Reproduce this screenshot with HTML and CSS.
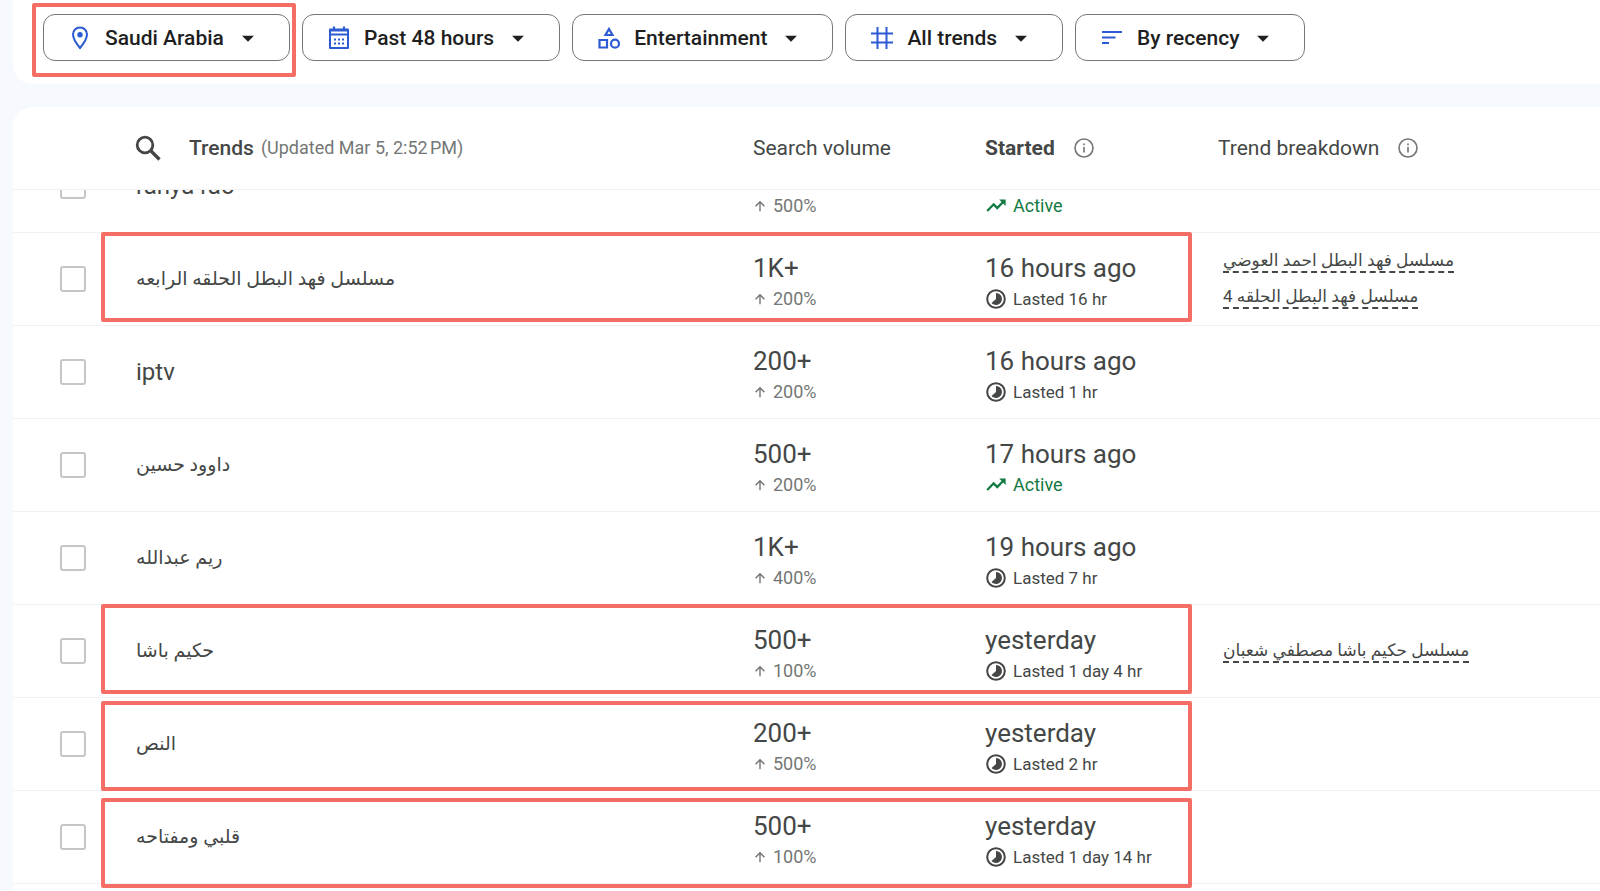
FILE: index.html
```html
<!DOCTYPE html>
<html lang="en">
<head>
<meta charset="utf-8">
<title>Trending searches</title>
<link rel="stylesheet" href="styles.css">
</head>
<body>
<svg class="sprite" aria-hidden="true">
  <symbol id="caret" viewBox="0 0 24 24"><path d="M5.500 9.500h13l-6.500 6.500z" fill="currentColor"/></symbol>
  <symbol id="info" viewBox="0 0 24 24"><circle cx="12" cy="12" r="9.800" fill="none" stroke="currentColor" stroke-width="1.800"/><path d="M12 11v6M12 7v2" stroke="currentColor" stroke-width="1.800"/></symbol>
  <symbol id="up" viewBox="0 0 24 24"><path d="M10.800 21V7.800l-5.400 5.400L3.500 11.500l8.500-8.500 8.500 8.500-1.900 1.700-5.400-5.400V21z" fill="currentColor"/></symbol>
  <symbol id="trend" viewBox="0 0 24 24"><path d="M15.500 5l2.600 2.600-4.700 4.800-4-4L1.500 16.600 3.200 18.300l6.200-6.300 4 4 6.400-6.700L22.500 12V5z" fill="currentColor"/></symbol>
  <symbol id="lasted" viewBox="0 0 24 24"><circle cx="12" cy="12" r="9.600" fill="none" stroke="currentColor" stroke-width="2.200"/><path d="M12 5.500v6.500l-4.900 4.300A6.500 6.500 0 1 0 12 5.500z" fill="currentColor"/></symbol>
</svg>

<header class="filters">
  <button class="filter filter--marked" type="button" aria-haspopup="listbox">
    <svg class="filter__icon" viewBox="0 0 24 24"><path d="M12 1.500c-4 0-7 3-7 7 0 5 7 13.500 7 13.500s7-8.500 7-13.500c0-4-3-7-7-7z" fill="none" stroke="currentColor" stroke-width="2"/><circle cx="12" cy="8.700" r="2.700" fill="currentColor"/></svg>
    <span>Saudi Arabia</span><svg class="filter__caret"><use href="#caret"/></svg>
  </button>
  <button class="filter" type="button" aria-haspopup="listbox">
    <svg class="filter__icon" viewBox="0 0 24 24"><path d="M3 3.500h18V22H3z" fill="none" stroke="currentColor" stroke-width="2" stroke-linejoin="round"/><path d="M3 4.500h18M3 8.500h18" stroke="currentColor" stroke-width="2.200"/><path d="M7 0.500v4M17 0.500v4" stroke="currentColor" stroke-width="2.200"/><path d="M7 13.500h10M7 17.500h10" stroke="currentColor" stroke-width="2" stroke-dasharray="2 2"/></svg>
    <span>Past 48 hours</span><svg class="filter__caret"><use href="#caret"/></svg>
  </button>
  <button class="filter" type="button" aria-haspopup="listbox">
    <svg class="filter__icon" viewBox="0 0 24 24"><path d="M12 3l3.500 6h-7zM2.500 14h7.500v7.500h-7.500z" fill="none" stroke="currentColor" stroke-width="2.200"/><circle cx="18" cy="17.700" r="4" fill="none" stroke="currentColor" stroke-width="2.200"/></svg>
    <span>Entertainment</span><svg class="filter__caret"><use href="#caret"/></svg>
  </button>
  <button class="filter" type="button" aria-haspopup="listbox">
    <svg class="filter__icon" viewBox="0 0 24 24"><path d="M7.500 1v22M16.500 1v22M1 7.500h22M1 16.500h22" stroke="currentColor" stroke-width="2"/></svg>
    <span>All trends</span><svg class="filter__caret"><use href="#caret"/></svg>
  </button>
  <button class="filter" type="button" aria-haspopup="listbox">
    <svg class="filter__icon" viewBox="0 0 24 24"><path d="M2 6h20M2 11.500h13.500M2 17h7" stroke="currentColor" stroke-width="2.200"/></svg>
    <span>By recency</span><svg class="filter__caret"><use href="#caret"/></svg>
  </button>
</header>

<main class="panel">
  <table class="trends">
    <thead>
      <tr class="row row--head">
        <td></td>
        <th><button class="search" type="button" aria-label="Search trends"><svg viewBox="0 0 26 26"><circle cx="10" cy="10" r="7.800" fill="none" stroke="currentColor" stroke-width="2.800"/><path d="M15.500 15.500l9 9" stroke="currentColor" stroke-width="3.400"/></svg></button><span class="title">Trends</span><small class="updated">(Updated Mar 5, 2:52&#8239;PM)</small></th>
        <th>Search volume</th>
        <th class="sorted">Started <svg class="info"><use href="#info"/></svg></th>
        <th>Trend breakdown <svg class="info"><use href="#info"/></svg></th>
      </tr>
    </thead>
    <tbody>
      <tr class="row">
        <td class="check"><input type="checkbox" aria-label="ranya rao"></td>
        <td class="name">ranya rao</td>
        <td><div class="value">500+</div><div class="sub sub--volume"><svg><use href="#up"/></svg>500%</div></td>
        <td><div class="value">16 hours ago</div><div class="sub sub--active"><svg><use href="#trend"/></svg>Active</div></td>
        <td></td>
      </tr>
      <tr class="row marked">
        <td class="check"><input type="checkbox" aria-label="مسلسل فهد البطل الحلقه الرابعه"></td>
        <td class="name"><bdi lang="ar">مسلسل فهد البطل الحلقه الرابعه</bdi></td>
        <td><div class="value">1K+</div><div class="sub sub--volume"><svg><use href="#up"/></svg>200%</div></td>
        <td><div class="value">16 hours ago</div><div class="sub"><svg><use href="#lasted"/></svg>Lasted 16 hr</div></td>
        <td class="breakdown"><a href="#" lang="ar" dir="rtl">مسلسل فهد البطل احمد العوضي</a><a href="#" lang="ar" dir="rtl">مسلسل فهد البطل الحلقه 4</a></td>
      </tr>
      <tr class="row">
        <td class="check"><input type="checkbox" aria-label="iptv"></td>
        <td class="name">iptv</td>
        <td><div class="value">200+</div><div class="sub sub--volume"><svg><use href="#up"/></svg>200%</div></td>
        <td><div class="value">16 hours ago</div><div class="sub"><svg><use href="#lasted"/></svg>Lasted 1 hr</div></td>
        <td></td>
      </tr>
      <tr class="row">
        <td class="check"><input type="checkbox" aria-label="داوود حسين"></td>
        <td class="name"><bdi lang="ar">داوود حسين</bdi></td>
        <td><div class="value">500+</div><div class="sub sub--volume"><svg><use href="#up"/></svg>200%</div></td>
        <td><div class="value">17 hours ago</div><div class="sub sub--active"><svg><use href="#trend"/></svg>Active</div></td>
        <td></td>
      </tr>
      <tr class="row">
        <td class="check"><input type="checkbox" aria-label="ريم عبدالله"></td>
        <td class="name"><bdi lang="ar">ريم عبدالله</bdi></td>
        <td><div class="value">1K+</div><div class="sub sub--volume"><svg><use href="#up"/></svg>400%</div></td>
        <td><div class="value">19 hours ago</div><div class="sub"><svg><use href="#lasted"/></svg>Lasted 7 hr</div></td>
        <td></td>
      </tr>
      <tr class="row marked">
        <td class="check"><input type="checkbox" aria-label="حكيم باشا"></td>
        <td class="name"><bdi lang="ar">حكيم باشا</bdi></td>
        <td><div class="value">500+</div><div class="sub sub--volume"><svg><use href="#up"/></svg>100%</div></td>
        <td><div class="value">yesterday</div><div class="sub"><svg><use href="#lasted"/></svg>Lasted 1 day 4 hr</div></td>
        <td class="breakdown"><a href="#" lang="ar" dir="rtl">مسلسل حكيم باشا مصطفي شعبان</a></td>
      </tr>
      <tr class="row marked marked--second">
        <td class="check"><input type="checkbox" aria-label="النص"></td>
        <td class="name"><bdi lang="ar">النص</bdi></td>
        <td><div class="value">200+</div><div class="sub sub--volume"><svg><use href="#up"/></svg>500%</div></td>
        <td><div class="value">yesterday</div><div class="sub"><svg><use href="#lasted"/></svg>Lasted 2 hr</div></td>
        <td></td>
      </tr>
      <tr class="row marked marked--third">
        <td class="check"><input type="checkbox" aria-label="قلبي ومفتاحه"></td>
        <td class="name"><bdi lang="ar">قلبي ومفتاحه</bdi></td>
        <td><div class="value">500+</div><div class="sub sub--volume"><svg><use href="#up"/></svg>100%</div></td>
        <td><div class="value">yesterday</div><div class="sub"><svg><use href="#lasted"/></svg>Lasted 1 day 14 hr</div></td>
        <td></td>
      </tr>
    </tbody>
  </table>
</main>
</body>
</html>
```

FILE: styles.css
```css
*,
*::after { box-sizing: border-box; }

body {
  margin: 0;
  height: 100vh;
  overflow: hidden;
  display: flex;
  flex-direction: column;
  gap: 23px;
  padding-left: 13px;
  background: #f6fafe;
  color: #444746;
  font-family: Roboto, "DejaVu Sans", sans-serif;
}

.sprite { display: none; }

.filters {
  display: flex;
  gap: 12px;
  padding: 14px 30px 23px;
  background: #fff;
  border-bottom-left-radius: 20px;
}

.filter {
  position: relative;
  display: flex;
  align-items: center;
  height: 47px;
  padding: 0 30px 0 24px;
  border: 1px solid #747775;
  border-radius: 12px;
  background: #fff;
  color: #1f1f1f;
  font: 500 21px/24px Roboto, sans-serif;
  white-space: nowrap;
}

.filter__icon {
  width: 24px;
  height: 24px;
  margin-right: 13px;
  color: #2c5bd4;
}

.filter__caret {
  width: 22px;
  height: 22px;
  margin-left: 13px;
}

.filter--marked::after,
.marked::after {
  content: "";
  position: absolute;
  border: 4px solid #f56e66;
  border-radius: 2px;
  pointer-events: none;
}

.filter--marked::after { inset: -12px -7px -17px -12px; }

.panel {
  flex: 1;
  min-height: 0;
  overflow: hidden;
  background: #fff;
  border-top-left-radius: 20px;
}

.trends,
.trends thead,
.trends tbody { display: block; }

.trends thead {
  position: relative;
  z-index: 1;
  background: #fff;
}

/* The list is scrolled partway under its header. */
.trends tbody { margin-top: -50px; }

.row {
  position: relative;
  display: grid;
  grid-template-columns: 122px minmax(200px, 1fr) 232px 233px 382px;
  height: 93px;
  border-bottom: 1px solid #f0f1f2;
}

.row--head {
  height: 83px;
  align-items: center;
}

th {
  display: flex;
  align-items: center;
  padding: 0;
  font-size: 21px;
  line-height: 24px;
  font-weight: 400;
  white-space: nowrap;
}

td { padding: 0; }

.search {
  width: 26px;
  height: 26px;
  margin-right: 28px;
  padding: 0;
  border: 0;
  background: none;
  color: #444746;
}

.search svg { display: block; width: 26px; height: 26px; }

.title { font-weight: 500; }

.updated {
  margin-left: 7px;
  color: #747775;
  font-size: 18px;
  font-weight: 400;
}

.sorted { font-weight: 700; }

.info {
  width: 22px;
  height: 22px;
  margin-left: 18px;
  color: #747775;
}

.check {
  display: flex;
  align-items: center;
  padding-left: 47px;
}

.check input {
  appearance: none;
  width: 26px;
  height: 26px;
  margin: 0;
  border: 2px solid #c4c7c5;
  border-radius: 3px;
  background: #fff;
}

.name {
  display: flex;
  align-items: center;
  padding-left: 1px;
  font-size: 24px;
  line-height: 28px;
}

.name bdi { font-size: 19px; }

.value {
  padding-top: 20px;
  font-size: 26px;
  line-height: 30px;
}

.sub {
  display: flex;
  align-items: center;
  gap: 6px;
  padding-top: 5px;
  font-size: 17px;
  line-height: 22px;
}

.sub svg { width: 22px; height: 22px; }

.sub--volume { color: #747775; font-size: 18px; }
.sub--volume svg { width: 14px; height: 14px; }
.sub--active { color: #137a42; font-size: 18px; }

.breakdown {
  display: flex;
  flex-direction: column;
  align-items: flex-start;
  justify-content: center;
  gap: 12px;
  padding-left: 5px;
}

.breakdown a {
  border-bottom: 2px dashed #444746;
  color: inherit;
  font-size: 17px;
  line-height: 22px;
  text-decoration: none;
}

.marked::after {
  top: -1px;
  left: 88px;
  right: 408px;
  height: 90px;
}

.marked--second::after { top: 3px; }
.marked--third::after { top: 7px; }
```
